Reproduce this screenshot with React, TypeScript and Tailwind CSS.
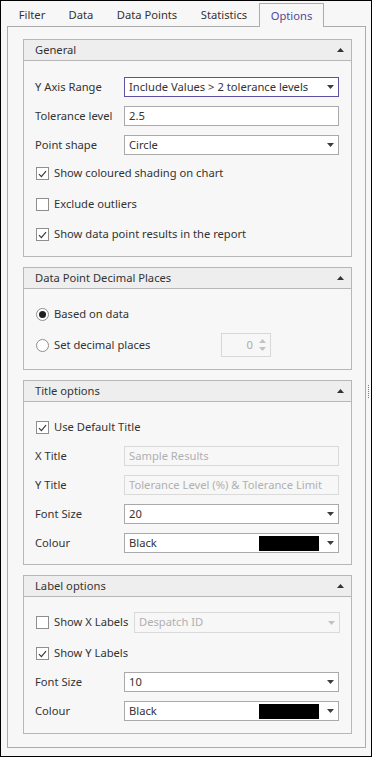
import React from 'react';

const Tri = ({ up = false, color = '#3c3c3c' }: { up?: boolean; color?: string }) => (
  <svg width="7" height="4" viewBox="0 0 7 4" className="shrink-0">
    <polygon points={up ? '0,4 7,4 3.5,0' : '0,0 7,0 3.5,4'} fill={color} />
  </svg>
);

const Check = ({ checked }: { checked: boolean }) => (
  <span className="flex h-[13px] w-[13px] shrink-0 items-center justify-center border border-[#8e8e8e] bg-white">
    {checked && (
      <svg width="9" height="8" viewBox="0 0 9 8">
        <path d="M1 4.2 L3.4 6.6 L8 1.2" fill="none" stroke="#3a3a3a" strokeWidth="1.2" />
      </svg>
    )}
  </span>
);

const Radio = ({ on }: { on: boolean }) => (
  <span className="flex h-[13px] w-[13px] shrink-0 items-center justify-center rounded-full border border-[#8e8e8e] bg-white">
    {on && <span className="h-[7px] w-[7px] rounded-full bg-[#1f1f1f]" />}
  </span>
);

const Group = ({
  title,
  children,
  className = '',
}: {
  title: string;
  children: React.ReactNode;
  className?: string;
}) => (
  <div className={`w-[329px] border border-[#b7b7b7] ${className}`}>
    <div className="flex h-[21px] items-center justify-between border-b border-[#b7b7b7] bg-[#eeeeee] pl-[11px] pr-[7px]">
      <span>{title}</span>
      <Tri up color="#333333" />
    </div>
    {children}
  </div>
);

const Row = ({
  label,
  children,
  className = '',
}: {
  label: string;
  children: React.ReactNode;
  className?: string;
}) => (
  <div className={`flex items-center pl-[11px] ${className}`}>
    <span className="w-[89px] shrink-0">{label}</span>
    {children}
  </div>
);

const Combo = ({
  value,
  focused = false,
  swatch = false,
}: {
  value: string;
  focused?: boolean;
  swatch?: boolean;
}) => (
  <div
    className={`flex h-[20px] w-[215px] items-center border bg-white pl-[4px] pr-[4px] ${
      focused ? 'border-[#5d51a0]' : 'border-[#a9a9a9]'
    }`}
  >
    <span className="flex-1 truncate">{value}</span>
    {swatch && <span className="mr-[8px] h-[15px] w-[60px] bg-black" />}
    <Tri />
  </div>
);

const TextBox = ({ value, disabled = false }: { value: string; disabled?: boolean }) => (
  <div
    className={`flex h-[20px] w-[215px] items-center overflow-hidden whitespace-nowrap border pl-[4px] ${
      disabled ? 'border-[#dadada] text-[#b0b0b0]' : 'border-[#a9a9a9] bg-white'
    }`}
  >
    {value}
  </div>
);

const CheckRow = ({
  checked,
  label,
  className = '',
}: {
  checked: boolean;
  label: string;
  className?: string;
}) => (
  <div className={`flex h-[19px] items-center pl-[12px] ${className}`}>
    <Check checked={checked} />
    <span className="ml-[5px]">{label}</span>
  </div>
);

const tabs = [
  { name: 'Filter', w: 'w-[50px]' },
  { name: 'Data', w: 'w-[48px]' },
  { name: 'Data Points', w: 'w-[84px]' },
  { name: 'Statistics', w: 'w-[70px]' },
];

export default function App() {
  return (
    <div className="flex h-[757px] w-[372px] flex-col border border-black bg-[#f7f7f7] font-['Noto_Sans',sans-serif] text-[11.2px] text-[#333333]">
      {/* tab strip */}
      <div className="flex h-[25px] shrink-0 items-end pl-[6px]">
        {tabs.map((t) => (
          <div key={t.name} className={`flex h-[24px] items-center justify-center pt-[2px] ${t.w}`}>
            {t.name}
          </div>
        ))}
        <div className="relative z-10 mb-[-1px] flex h-[24px] w-[65px] items-center justify-center border border-b-0 border-[#acacac] bg-[#f7f7f7] pt-[2px] text-[#54479a]">
          Options
        </div>
      </div>

      <div className="flex pl-[6px]">
        <div className="flex h-[722px] w-[359px] flex-col border border-[#acacac] pl-[15px] pt-[12px]">
          <Group title="General">
            <div className="flex flex-col pb-[12px] pt-[16px]">
              <Row label="Y Axis Range">
                <Combo value="Include Values > 2 tolerance levels" focused />
              </Row>
              <Row label="Tolerance level" className="mt-[9px]">
                <TextBox value="2.5" />
              </Row>
              <Row label="Point shape" className="mt-[9px]">
                <Combo value="Circle" />
              </Row>
              <CheckRow checked label="Show coloured shading on chart" className="mt-[9px]" />
              <CheckRow checked={false} label="Exclude outliers" className="mt-[12px]" />
              <CheckRow checked label="Show data point results in the report" className="mt-[11px]" />
            </div>
          </Group>

          <Group title="Data Point Decimal Places" className="mt-[10px]">
            <div className="flex flex-col pb-[12px] pt-[16px]">
              <div className="flex h-[19px] items-center pl-[12px]">
                <Radio on />
                <span className="ml-[5px]">Based on data</span>
              </div>
              <div className="mt-[9px] flex h-[24px] items-center pl-[12px]">
                <Radio on={false} />
                <span className="ml-[5px] w-[167px]">Set decimal places</span>
                <div className="flex h-[24px] w-[50px] items-center justify-end border border-[#d8d8d8] pr-[4px] text-[#ababab]">
                  <span className="mr-[6px]">0</span>
                  <div className="flex flex-col gap-[4px]">
                    <Tri up color="#c2c2c2" />
                    <Tri color="#c2c2c2" />
                  </div>
                </div>
              </div>
            </div>
          </Group>

          <Group title="Title options" className="mt-[10px]">
            <div className="flex flex-col pb-[11px] pt-[16px]">
              <CheckRow checked label="Use Default Title" />
              <Row label="X Title" className="mt-[9px]">
                <TextBox value="Sample Results" disabled />
              </Row>
              <Row label="Y Title" className="mt-[9px]">
                <TextBox value="Tolerance Level (%) & Tolerance Limit" disabled />
              </Row>
              <Row label="Font Size" className="mt-[9px]">
                <Combo value="20" />
              </Row>
              <Row label="Colour" className="mt-[9px]">
                <Combo value="Black" swatch />
              </Row>
            </div>
          </Group>

          <Group title="Label options" className="mt-[10px]">
            <div className="flex flex-col pb-[12px] pt-[15px]">
              <div className="flex h-[21px] items-center pl-[12px] pr-[11px]">
                <Check checked={false} />
                <span className="ml-[5px]">Show X Labels</span>
                <div className="ml-auto flex h-[21px] w-[206px] items-center border border-[#dadada] pl-[4px] pr-[4px] text-[#b0b0b0]">
                  <span className="flex-1">Despatch ID</span>
                  <Tri color="#c2c2c2" />
                </div>
              </div>
              <CheckRow checked label="Show Y Labels" className="mt-[11px]" />
              <Row label="Font Size" className="mt-[9px]">
                <Combo value="10" />
              </Row>
              <Row label="Colour" className="mt-[9px]">
                <Combo value="Black" swatch />
              </Row>
            </div>
          </Group>
        </div>

        {/* splitter grip */}
        <div className="flex flex-1 items-center justify-center">
          <svg width="3" height="14" viewBox="0 0 3 14" className="mt-[10px]">
            {[0, 2, 4, 6, 8, 10, 12].map((y) => (
              <rect key={y} x="1" y={y} width="1" height="1" fill="#7a7a7a" />
            ))}
          </svg>
        </div>
      </div>
    </div>
  );
}
